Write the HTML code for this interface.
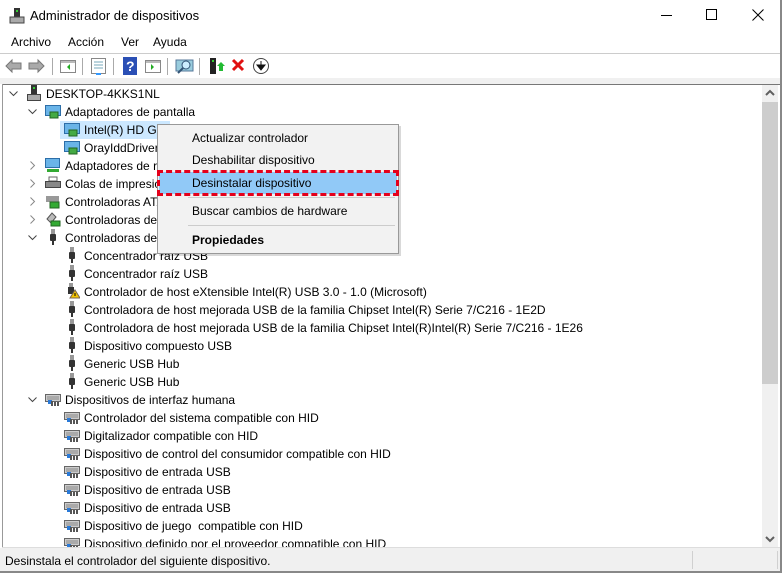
<!DOCTYPE html>
<html><head><meta charset="utf-8"><style>
*{margin:0;padding:0;box-sizing:border-box}
body{width:782px;height:573px;background:#fff;font-family:"Segoe UI","Liberation Sans",sans-serif;font-size:12px;color:#000;position:relative;overflow:hidden}
.a{position:absolute}
.row{position:absolute;height:18px;line-height:18px;white-space:nowrap;margin-top:1px}
.ic{position:absolute;width:16px;height:16px}
.chev{position:absolute;width:9px;height:9px}
</style></head><body>
<div class="a" style="left:780px;top:0;width:2px;height:573px;background:#888"></div>
<div class="a" style="left:0;top:571px;width:782px;height:2px;background:#888"></div>
<svg class="a" style="left:9px;top:7px" width="16" height="18"><rect x="5" y="1" width="6" height="9" fill="#333"/><rect x="7" y="3" width="2" height="2" fill="#3c3"/><rect x="1" y="10" width="14" height="6" fill="#aaa" stroke="#444"/></svg>
<div class="a" style="left:30px;top:7px;font-size:13px;line-height:18px">Administrador de dispositivos</div>
<div class="a" style="left:661px;top:15px;width:11px;height:1px;background:#000"></div>
<div class="a" style="left:706px;top:9px;width:11px;height:11px;border:1px solid #000"></div>
<svg class="a" style="left:752px;top:9px" width="12" height="12"><path d="M0.5 0.5L11.5 11.5M11.5 0.5L0.5 11.5" stroke="#000"/></svg>
<div class="a" style="left:11px;top:34px;line-height:16px">Archivo</div>
<div class="a" style="left:68px;top:34px;line-height:16px">Acción</div>
<div class="a" style="left:121px;top:34px;line-height:16px">Ver</div>
<div class="a" style="left:153px;top:34px;line-height:16px">Ayuda</div>
<div class="a" style="left:0;top:53px;width:780px;height:1px;background:#ccc"></div>
<svg class="a" style="left:0;top:54px" width="280" height="24">
<path d="M6 12l6-6v3h9v6h-9v3z" fill="#aaa" stroke="#777"/>
<path d="M44 12l-6-6v3h-9v6h9v3z" fill="#aaa" stroke="#777"/>
<line x1="52.5" y1="4" x2="52.5" y2="21" stroke="#aaa"/>
<rect x="60.5" y="6.5" width="15" height="12" fill="#fff" stroke="#888"/><rect x="61" y="7" width="14" height="2" fill="#bbb"/><path d="M70 10l-3 3 3 3z" fill="#2a2"/>
<line x1="82.5" y1="4" x2="82.5" y2="21" stroke="#aaa"/>
<rect x="91.5" y="4.5" width="14" height="15" fill="#fff" stroke="#888"/><path d="M94 8h9M94 11h9M94 14h9" stroke="#7ab"/><rect x="96" y="19" width="5" height="2" fill="#39f"/>
<line x1="113.5" y1="4" x2="113.5" y2="21" stroke="#aaa"/>
<rect x="123" y="3" width="14" height="18" fill="#2a4fb5"/><text x="126" y="17" fill="#fff" font-size="14" font-weight="bold" font-family="Liberation Sans">?</text>
<rect x="145.5" y="6.5" width="15" height="12" fill="#fff" stroke="#888"/><rect x="146" y="7" width="14" height="2" fill="#bbb"/><path d="M151 10l3 3-3 3z" fill="#2a2"/>
<line x1="167.5" y1="4" x2="167.5" y2="21" stroke="#aaa"/>
<rect x="176" y="6" width="17" height="11" fill="#9cd" stroke="#579"/><circle cx="186" cy="11" r="4" fill="#cef" stroke="#357"/><path d="M183 14l-5 5" stroke="#357" stroke-width="2"/>
<line x1="199.5" y1="4" x2="199.5" y2="21" stroke="#aaa"/>
<rect x="210" y="4" width="6" height="16" fill="#222"/><rect x="212" y="6" width="2" height="2" fill="#3c3"/><path d="M217 12l4-4 4 4h-2v5h-4v-5z" fill="#2b3"/>
<path d="M233 6l10 10M243 6l-10 10" stroke="#e01010" stroke-width="3"/>
<circle cx="261" cy="12" r="7.5" fill="#fff" stroke="#444"/><path d="M261 7v5M257 11h8l-4 5z" fill="#111" stroke="#111"/>
</svg>
<div class="a" style="left:0;top:78px;width:780px;height:6px;background:#f0f0f0"></div>
<div class="a" style="left:2px;top:84px;width:778px;height:1px;background:#777"></div>
<div class="a" style="left:2px;top:84px;width:1px;height:464px;background:#999"></div>
<div class="a" style="left:762px;top:85px;width:16px;height:463px;background:#f0f0f0"></div>
<div class="a" style="left:762px;top:102px;width:16px;height:282px;background:#cdcdcd"></div>
<svg class="a" style="left:765px;top:89px" width="10" height="8"><path d="M1 6l4-4 4 4" stroke="#606060" stroke-width="2" fill="none"/></svg>
<svg class="a" style="left:765px;top:535px" width="10" height="8"><path d="M1 2l4 4 4-4" stroke="#606060" stroke-width="2" fill="none"/></svg>
<div class="a" style="left:2px;top:547px;width:778px;height:1px;background:#ddd"></div>
<div class="a" style="left:0;top:548px;width:780px;height:23px;background:#f0f0f0"></div>
<div class="a" style="left:692px;top:551px;width:1px;height:18px;background:#d0d0d0"></div>
<div class="a" style="left:777px;top:551px;width:1px;height:18px;background:#d0d0d0"></div>
<div class="a" style="left:5px;top:553px;line-height:16px">Desinstala el controlador del siguiente dispositivo.</div>

<div class="a" style="left:60px;top:121px;width:110px;height:18px;background:#cce8ff"></div>

<svg width="0" height="0" style="position:absolute">
<defs>
<symbol id="down" viewBox="0 0 9 9"><path d="M0.5 2.5l4 4 4-4" stroke="#444" fill="none"/></symbol>
<symbol id="right" viewBox="0 0 9 9"><path d="M2.5 0.5l4 4-4 4" stroke="#888" fill="none"/></symbol>
<symbol id="mon" viewBox="0 0 16 16"><rect x="0.5" y="2.5" width="15" height="10" fill="#6ab4e8" stroke="#2d6ea8"/><rect x="5" y="9" width="8" height="6" fill="#4a4" stroke="#262"/></symbol>
<symbol id="usb" viewBox="0 0 16 16"><rect x="6" y="0" width="4" height="5" fill="#999"/><rect x="5" y="5" width="6" height="7" rx="1" fill="#333"/><rect x="7" y="12" width="2" height="4" fill="#333"/></symbol>
<symbol id="hid" viewBox="0 0 16 16"><rect x="0.5" y="3.5" width="15" height="7" fill="#ccc" stroke="#666"/><path d="M2 6h12M2 8h12" stroke="#888"/><rect x="3" y="9" width="4" height="4" fill="#2a7ad8"/><path d="M7 10v5M10 11v4M13 11v4" stroke="#555" stroke-width="2"/></symbol>
<symbol id="pc" viewBox="0 0 16 16"><rect x="5" y="0" width="6" height="9" fill="#333"/><rect x="7" y="2" width="2" height="2" fill="#3c3"/><rect x="1.5" y="9.5" width="13" height="6" fill="#aaa" stroke="#444"/></symbol>
</defs></svg>

<svg class="chev" style="left:9px;top:89px"><use href="#down"/></svg>
<svg class="ic" style="left:26px;top:85px"><use href="#pc"/></svg>
<div class="row" style="left:46px;top:84px">DESKTOP-4KKS1NL</div>

<svg class="chev" style="left:28px;top:107px"><use href="#down"/></svg>
<svg class="ic" style="left:45px;top:103px"><use href="#mon"/></svg>
<div class="row" style="left:65px;top:102px">Adaptadores de pantalla</div>
<svg class="ic" style="left:64px;top:121px"><use href="#mon"/></svg>
<div class="row" style="left:84px;top:120px">Intel(R) HD Gr</div>
<svg class="ic" style="left:64px;top:139px"><use href="#mon"/></svg>
<div class="row" style="left:84px;top:138px">OrayIddDriver</div>

<svg class="chev" style="left:28px;top:161px"><use href="#right"/></svg>
<svg class="ic" style="left:45px;top:157px" viewBox="0 0 16 16"><rect x="0.5" y="1.5" width="14" height="9" fill="#6ab4e8" stroke="#2d6ea8"/><rect x="2" y="12" width="12" height="3" fill="#3a3"/></svg>
<div class="row" style="left:65px;top:156px">Adaptadores de r</div>
<svg class="chev" style="left:28px;top:179px"><use href="#right"/></svg>
<svg class="ic" style="left:45px;top:175px" viewBox="0 0 16 16"><rect x="4" y="2" width="8" height="4" fill="#fff" stroke="#666"/><rect x="0.5" y="6.5" width="15" height="6" fill="#888" stroke="#444"/></svg>
<div class="row" style="left:65px;top:174px">Colas de impresió</div>
<svg class="chev" style="left:28px;top:197px"><use href="#right"/></svg>
<svg class="ic" style="left:45px;top:193px" viewBox="0 0 16 16"><rect x="1" y="3" width="13" height="6" fill="#999"/><rect x="5" y="9" width="9" height="6" fill="#3a3" stroke="#262"/></svg>
<div class="row" style="left:65px;top:192px">Controladoras ATA</div>
<svg class="chev" style="left:28px;top:215px"><use href="#right"/></svg>
<svg class="ic" style="left:45px;top:211px" viewBox="0 0 16 16"><path d="M2 8l5-6 4 4-5 6z" fill="#bbb" stroke="#555"/><rect x="6" y="10" width="9" height="5" fill="#3a3" stroke="#262"/></svg>
<div class="row" style="left:65px;top:210px">Controladoras de</div>
<svg class="chev" style="left:28px;top:233px"><use href="#down"/></svg>
<svg class="ic" style="left:45px;top:229px"><use href="#usb"/></svg>
<div class="row" style="left:65px;top:228px">Controladoras de</div>

<svg class="ic" style="left:64px;top:247px"><use href="#usb"/></svg><div class="row" style="left:84px;top:246px">Concentrador raíz USB</div>
<svg class="ic" style="left:64px;top:265px"><use href="#usb"/></svg><div class="row" style="left:84px;top:264px">Concentrador raíz USB</div>
<svg class="ic" style="left:64px;top:283px" viewBox="0 0 16 16"><rect x="5" y="0" width="4" height="4" fill="#999"/><rect x="4" y="4" width="6" height="7" fill="#333"/><path d="M11 7l5 8h-10z" fill="#f5c400" stroke="#765"/><rect x="10.5" y="10" width="1" height="3" fill="#000"/></svg><div class="row" style="left:84px;top:282px">Controlador de host eXtensible Intel(R) USB 3.0 - 1.0 (Microsoft)</div>
<svg class="ic" style="left:64px;top:301px"><use href="#usb"/></svg><div class="row" style="left:84px;top:300px">Controladora de host mejorada USB de la familia Chipset Intel(R) Serie 7/C216 - 1E2D</div>
<svg class="ic" style="left:64px;top:319px"><use href="#usb"/></svg><div class="row" style="left:84px;top:318px">Controladora de host mejorada USB de la familia Chipset Intel(R)Intel(R) Serie 7/C216 - 1E26</div>
<svg class="ic" style="left:64px;top:337px"><use href="#usb"/></svg><div class="row" style="left:84px;top:336px">Dispositivo compuesto USB</div>
<svg class="ic" style="left:64px;top:355px"><use href="#usb"/></svg><div class="row" style="left:84px;top:354px">Generic USB Hub</div>
<svg class="ic" style="left:64px;top:373px"><use href="#usb"/></svg><div class="row" style="left:84px;top:372px">Generic USB Hub</div>

<svg class="chev" style="left:28px;top:395px"><use href="#down"/></svg>
<svg class="ic" style="left:45px;top:391px"><use href="#hid"/></svg>
<div class="row" style="left:65px;top:390px">Dispositivos de interfaz humana</div>
<svg class="ic" style="left:64px;top:409px"><use href="#hid"/></svg><div class="row" style="left:84px;top:408px">Controlador del sistema compatible con HID</div>
<svg class="ic" style="left:64px;top:427px"><use href="#hid"/></svg><div class="row" style="left:84px;top:426px">Digitalizador compatible con HID</div>
<svg class="ic" style="left:64px;top:445px"><use href="#hid"/></svg><div class="row" style="left:84px;top:444px">Dispositivo de control del consumidor compatible con HID</div>
<svg class="ic" style="left:64px;top:463px"><use href="#hid"/></svg><div class="row" style="left:84px;top:462px">Dispositivo de entrada USB</div>
<svg class="ic" style="left:64px;top:481px"><use href="#hid"/></svg><div class="row" style="left:84px;top:480px">Dispositivo de entrada USB</div>
<svg class="ic" style="left:64px;top:499px"><use href="#hid"/></svg><div class="row" style="left:84px;top:498px">Dispositivo de entrada USB</div>
<svg class="ic" style="left:64px;top:517px"><use href="#hid"/></svg><div class="row" style="left:84px;top:516px">Dispositivo de juego&nbsp; compatible con HID</div>
<div class="a" style="left:3px;top:534px;width:758px;height:13px;overflow:hidden">
<svg class="ic" style="left:61px;top:1px"><use href="#hid"/></svg><div class="row" style="left:81px;top:0px">Dispositivo definido por el proveedor compatible con HID</div></div>

<div class="a" style="left:159px;top:126px;width:242px;height:130px;background:rgba(0,0,0,0.15)"></div>
<div class="a" style="left:157px;top:124px;width:242px;height:130px;background:#f2f2f2;border:1px solid #999"></div>
<div class="a" style="left:159px;top:172px;width:238px;height:22px;background:#91c9f7"></div>
<div class="a" style="left:157px;top:170px;width:242px;height:26px;border:3px dashed #e4001b"></div>
<div class="a" style="left:188px;top:197px;width:207px;height:1px;background:#ccc"></div>
<div class="a" style="left:188px;top:225px;width:207px;height:1px;background:#ccc"></div>
<div class="a" style="left:192px;top:129px;line-height:18px">Actualizar controlador</div>
<div class="a" style="left:192px;top:151px;line-height:18px">Deshabilitar dispositivo</div>
<div class="a" style="left:192px;top:174px;line-height:18px">Desinstalar dispositivo</div>
<div class="a" style="left:192px;top:202px;line-height:18px">Buscar cambios de hardware</div>
<div class="a" style="left:192px;top:231px;line-height:18px;font-weight:bold">Propiedades</div>
</body></html>
